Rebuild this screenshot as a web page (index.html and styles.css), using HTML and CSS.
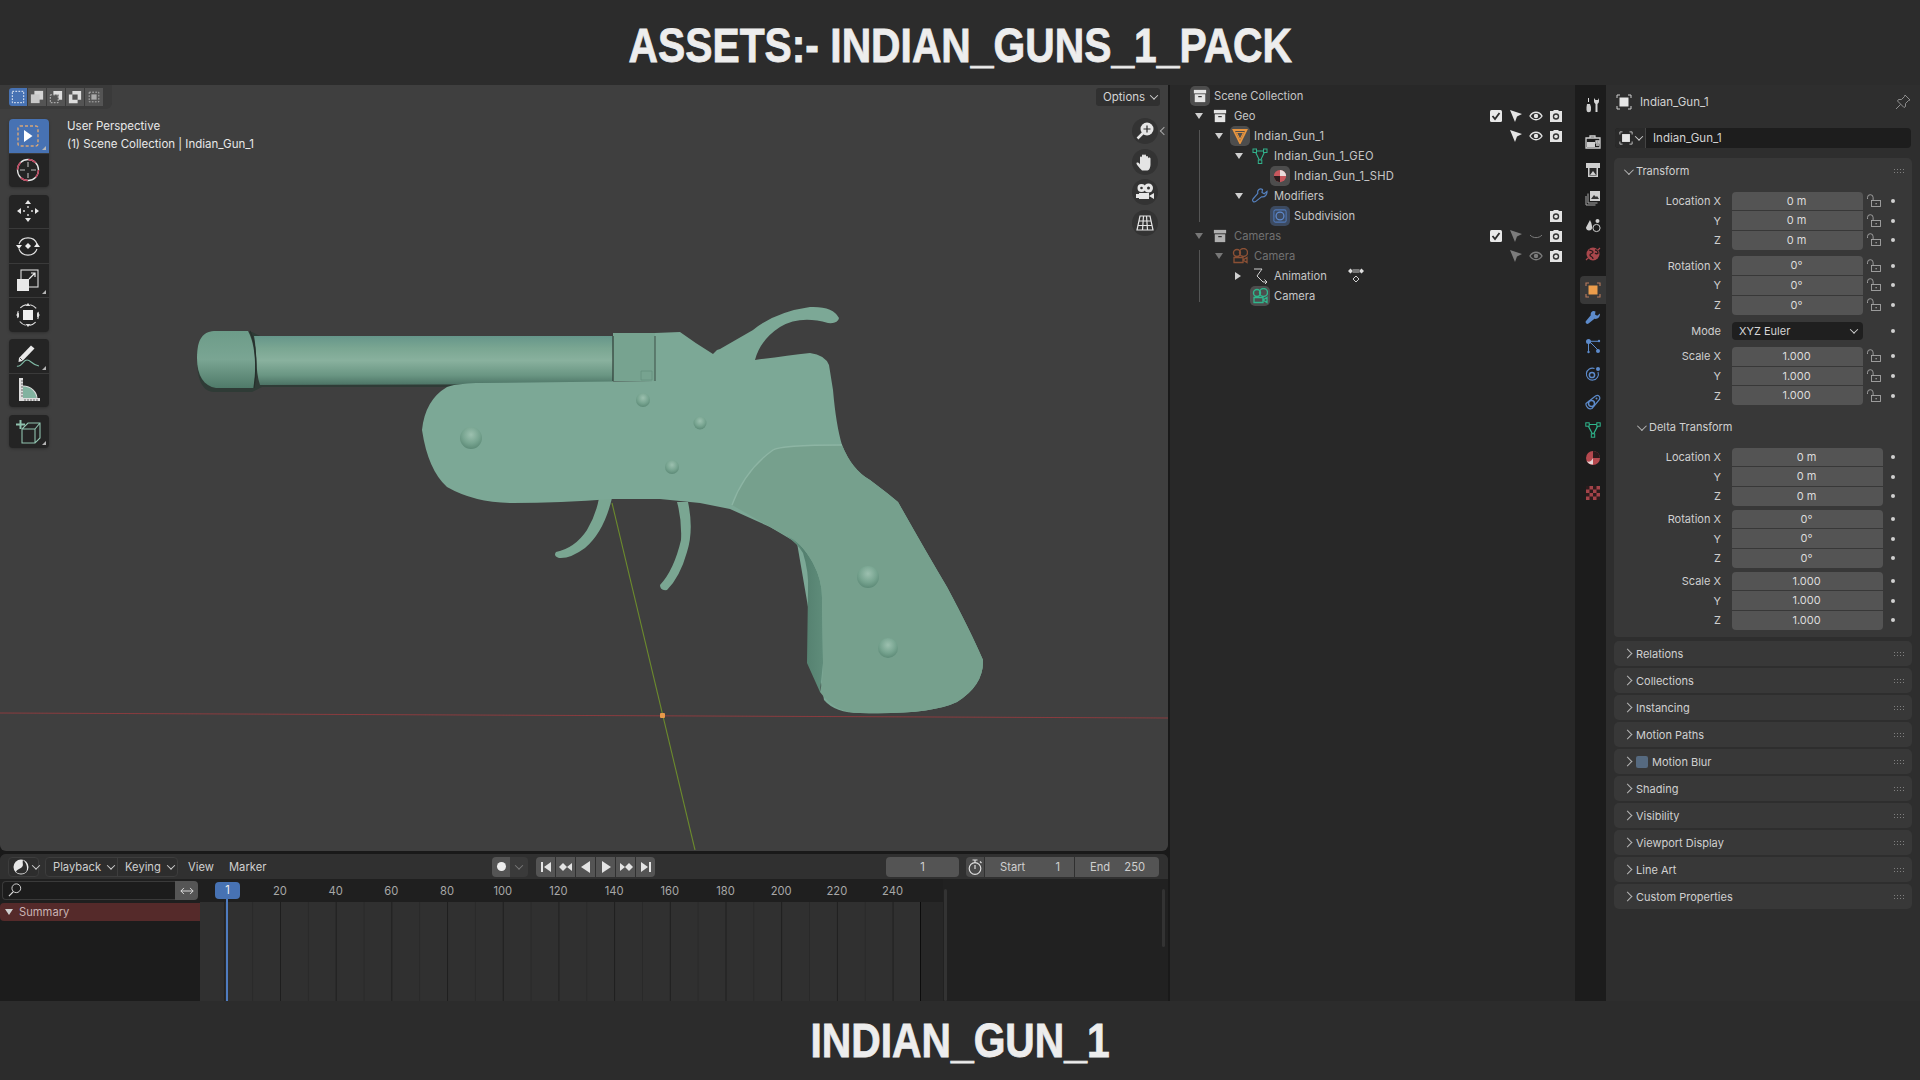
FILE: index.html
```html
<!DOCTYPE html>
<html lang="en">
<head>
<meta charset="utf-8">
<title>Indian Gun 1</title>
<link rel="stylesheet" href="styles.css">
</head>
<body>
<svg class="sprite" width="0" height="0" aria-hidden="true">
  <defs>
    <linearGradient id="barrelGrad" x1="0" y1="0" x2="0" y2="1">
      <stop offset="0" stop-color="#66968a"/><stop offset=".25" stop-color="#7aa692"/><stop offset=".5" stop-color="#89b19e"/><stop offset=".8" stop-color="#6a9683"/><stop offset="1" stop-color="#4c7365"/>
    </linearGradient>
    <linearGradient id="muzzleGrad" x1="0" y1="0" x2="0" y2="1">
      <stop offset="0" stop-color="#6d9c89"/><stop offset=".5" stop-color="#7aa593"/><stop offset="1" stop-color="#4f7a69"/>
    </linearGradient>
    <linearGradient id="stripGrad" x1="0" y1="0" x2="1" y2="0">
      <stop offset="0" stop-color="#6f9d8a"/><stop offset=".5" stop-color="#54806f"/><stop offset="1" stop-color="#5f8c7a"/>
    </linearGradient>
    <radialGradient id="rivetGrad" cx=".5" cy=".35" r=".65">
      <stop offset="0" stop-color="#9cc0af"/><stop offset=".6" stop-color="#77a490"/><stop offset="1" stop-color="#5d8a77"/>
    </radialGradient>
  </defs>
  <symbol id="i-select" viewBox="0 0 24 24"><rect x="2" y="2" width="20" height="20" rx="2" fill="none" stroke="#d8a679" stroke-width="1.4" stroke-dasharray="3 2"/><path d="M8 6l8.500 6L8 18z" fill="#fff"/></symbol>
  <symbol id="i-cursor" viewBox="0 0 24 24"><circle cx="12" cy="12" r="10.5" fill="none" stroke="#e4e4e4" stroke-width="1.3"/><circle cx="12" cy="12" r="10.5" fill="none" stroke="#c0425c" stroke-width="1.4" stroke-dasharray="8 8.5"/><path d="M12 4v5M12 15v5M4 12h5M15 12h5" stroke="#bbb" stroke-width="1.1"/></symbol>
  <symbol id="i-move" viewBox="0 0 24 24"><path d="M12 1l3 4H9zM12 23l-3-4h6zM1 12l4-3v6zM23 12l-4 3V9z" fill="#e8e8e8"/><path d="M12 7v2M12 15v2M7 12h2M15 12h2" stroke="#ddd" stroke-width="1.4"/></symbol>
  <symbol id="i-rotate" viewBox="0 0 24 24"><path d="M3 10a9.500 9 0 0 1 18 0M21 15a9.500 9 0 0 1-18 0" fill="none" stroke="#e4e4e4" stroke-width="1.1"/><path d="M12 9l3 3-3 3-3-3z" fill="#eee"/><path d="M0 11h6l-3 4zM24 13h-6l3-4z" fill="#eee"/></symbol>
  <symbol id="i-scale" viewBox="0 0 24 24"><rect x="5" y="2" width="17" height="17" fill="none" stroke="#ddd" stroke-width="1.1"/><rect x="1" y="11" width="12" height="12" fill="#e9e9e9"/><path d="M13 11l6-6M15 5h4v4" fill="none" stroke="#eee" stroke-width="1.2"/></symbol>
  <symbol id="i-transform" viewBox="0 0 24 24"><circle cx="12" cy="12" r="10.5" fill="none" stroke="#ddd" stroke-width="1.1" stroke-dasharray="7 3.9" stroke-dashoffset="3"/><rect x="7" y="7" width="10" height="10" fill="#eee"/><path d="M12 0l2.500 3h-5zM12 24l-2.500-3h5zM0 12l3-2.500v5zM24 12l-3 2.500v-5z" fill="#ddd"/></symbol>
  <symbol id="i-annotate" viewBox="0 0 24 24"><path d="M3 14L15 1.500l3.500 3L6.500 17 2.500 18z" fill="#eaeaea"/><path d="M4 14l2.500 2.500" stroke="#333" stroke-width=".8"/><path d="M1 22c4 2 6-6 10-6s5 5 12 6" fill="none" stroke="#7fb9a4" stroke-width="1.200"/></symbol>
  <symbol id="i-measure" viewBox="0 0 24 24"><path d="M7 21V8c8 0 14 6 14 13z" fill="#82b3a0"/><path d="M7 8c8 0 14 6 14 13" fill="none" stroke="#ddd" stroke-width="1.1"/><rect x="3" y="0" width="4" height="23" fill="#ddd"/><rect x="3" y="20" width="21" height="3" fill="#ddd"/><path d="M5 3h2M5 6h2M5 9h2M5 12h2M5 15h2M5 18h2M9 21v2M12 21v2M15 21v2M18 21v2M21 21v2" stroke="#333" stroke-width=".7"/></symbol>
  <symbol id="i-addcube" viewBox="0 0 26 26"><path d="M7 11l6-6h12v15l-5 5H7zM7 11h13v14M20 11l5-6" fill="none" stroke="#8fc2ae" stroke-width="1.100"/><path d="M1 6.500h9M5.500 2v9" stroke="#8fc2ae" stroke-width="2"/></symbol>
  <symbol id="i-m1" viewBox="0 0 16 16"><rect x="1.500" y="1.500" width="13" height="13" fill="none" stroke="#fff" stroke-dasharray="2 1.500"/></symbol>
  <symbol id="i-m2" viewBox="0 0 16 16"><rect x="5" y="1" width="10" height="10" fill="#d5d5d5"/><rect x="1" y="5" width="10" height="10" fill="#c8c8c8"/></symbol>
  <symbol id="i-m3" viewBox="0 0 16 16"><rect x="1.500" y="5.500" width="9" height="9" fill="none" stroke="#ccc" stroke-dasharray="2 1.500"/><path d="M5 1h10v10h-4V5H5z" fill="#ddd"/></symbol>
  <symbol id="i-m4" viewBox="0 0 16 16"><path d="M5 1h10v10h-4V5H5zM1 5h4v6h6v4H1z" fill="#ddd"/></symbol>
  <symbol id="i-m5" viewBox="0 0 16 16"><rect x="2.500" y="2.500" width="11" height="11" fill="none" stroke="#bbb" stroke-dasharray="2 1.500"/><rect x="5" y="5" width="6" height="6" fill="#aaa"/></symbol>
  <symbol id="i-zoomin" viewBox="0 0 18 18"><circle cx="11" cy="7" r="6.500" fill="#e6e6e6"/><path d="M1.500 16.500L7 11" stroke="#e6e6e6" stroke-width="2.500"/><path d="M11 3.500v7M7.500 7h7" stroke="#2a2a2a" stroke-width="1.200"/></symbol>
  <symbol id="i-hand" viewBox="0 0 18 18"><path d="M6 17.500C3 14.500 0 11 .5 10s2.500-.5 3.500 1.500V4.500c0-1.500 2-1.500 2 0V8V2.500c0-1.500 2-1.500 2 0V8V2.500c0-1.500 2-1.500 2 0V8V4c0-1.500 2-1.500 2 0v3.500-2c0-1.500 2.500-1.500 2.500 0v6c0 3-1.500 6-3 6z" fill="#e4e4e4"/></symbol>
  <symbol id="i-camgiz" viewBox="0 0 18 18"><circle cx="5.500" cy="5" r="4" fill="#e6e6e6"/><circle cx="12.500" cy="5" r="4.500" fill="#e6e6e6"/><circle cx="5.500" cy="5" r="1.300" fill="#333"/><circle cx="12.500" cy="5" r="1.500" fill="#333"/><rect x="3" y="10" width="10" height="6" fill="#e6e6e6"/><path d="M13 13l5-3v6zM0 11h3v4H0z" fill="#e6e6e6"/></symbol>
  <symbol id="i-persp" viewBox="0 0 18 18"><path d="M4 2h10l3 14H1zM2.700 7h12.600M2 11.500h14M7.500 2L6.500 16M10.500 2l1 14" fill="none" stroke="#e4e4e4" stroke-width="1.200"/></symbol>
  <symbol id="i-coll" viewBox="0 0 16 16"><path d="M1 1h14v4H1z" fill="currentColor"/><path d="M2 6h12v9H2z" fill="currentColor"/><rect x="6" y="8" width="4" height="1.400" fill="#333"/></symbol>
  <symbol id="i-objmesh" viewBox="0 0 16 16"><path d="M1.500 2h13L8 15z" fill="none" stroke="#e8953f" stroke-width="1.800"/><path d="M4.500 4.500h7L8 11.500z" fill="none" stroke="#e8953f" stroke-width="1.100"/></symbol>
  <symbol id="i-mesh" viewBox="0 0 16 16"><path d="M3 3h10L8 13.500z" fill="none" stroke="#31b08a" stroke-width="1.100"/><rect x="1" y="1" width="3.500" height="3.500" fill="#282828" stroke="#31b08a"/><rect x="11.500" y="1" width="3.500" height="3.500" fill="#282828" stroke="#31b08a"/><rect x="6.300" y="12" width="3.500" height="3.500" fill="#282828" stroke="#31b08a"/></symbol>
  <symbol id="i-mat" viewBox="0 0 16 16"><circle cx="8" cy="8" r="7" fill="#c9575d"/><path d="M8 1a7 7 0 0 1 7 7H8z" fill="#e9dcdc"/><path d="M8 8v7a7 7 0 0 1-7-7z" fill="#2e1d1e"/></symbol>
  <symbol id="i-wrench" viewBox="0 0 16 16"><path d="M15 3.500l-2.800 2.300L10 4.500l.5-3C8-.2 5 1.800 5.800 5.300L1 11c-1.200 1.500.6 3.800 2.500 2.600l6-4.800c3.500.6 5.800-2.300 5.500-5.300z" fill="none" stroke="#5580bd" stroke-width="1.200"/></symbol>
  <symbol id="i-wrenchfill" viewBox="0 0 16 16"><path d="M15 3.500l-2.800 2.300L10 4.500l.5-3C8-.2 5 1.800 5.800 5.300L1 11c-1.200 1.500.6 3.800 2.500 2.600l6-4.800c3.500.6 5.800-2.300 5.500-5.300z" fill="#5d8bcb"/></symbol>
  <symbol id="i-subd" viewBox="0 0 16 16"><rect x="1" y="1" width="14" height="14" rx="2" fill="none" stroke="#4f78b8" stroke-width="1.200"/><circle cx="8" cy="8" r="4.500" fill="none" stroke="#5f8bcf" stroke-width="1.400"/></symbol>
  <symbol id="i-check" viewBox="0 0 12 12"><rect width="12" height="12" rx="1.500" fill="#e8e8e8"/><path d="M2.500 6l2.500 3 4.500-6" fill="none" stroke="#2a2a2a" stroke-width="1.800"/></symbol>
  <symbol id="i-arrow" viewBox="0 0 14 14"><path d="M1 1l12 4-5 2.500L6 13z" fill="currentColor"/></symbol>
  <symbol id="i-eye" viewBox="0 0 14 14"><path d="M1 7c3-5 9-5 12 0-3 5-9 5-12 0z" fill="none" stroke="currentColor" stroke-width="1.400"/><circle cx="7" cy="7" r="2.200" fill="currentColor"/></symbol>
  <symbol id="i-eyeoff" viewBox="0 0 14 14"><path d="M1 6c3 3.500 9 3.500 12 0" fill="none" stroke="currentColor"/></symbol>
  <symbol id="i-render" viewBox="0 0 14 14"><path d="M1 2h3l1-1h4l1 1h3v11H1z" fill="currentColor"/><circle cx="7" cy="7.500" r="3.200" fill="#333"/><circle cx="7" cy="7.500" r="1.800" fill="currentColor"/></symbol>
  <symbol id="i-camobj" viewBox="0 0 16 16"><circle cx="5" cy="5" r="3.500" fill="none" stroke="currentColor" stroke-width="1.400"/><circle cx="11.500" cy="4.500" r="4" fill="none" stroke="currentColor" stroke-width="1.400"/><path d="M2 9.500h9v5H2zM11 12l4-2.500v5z" fill="none" stroke="currentColor" stroke-width="1.300"/></symbol>
  <symbol id="i-anim" viewBox="0 0 16 16"><path d="M2 1h8L5 8l6 6h4M12.500 11.500L15 14l-2.500 2.500" fill="none" stroke="#d0d0d0" stroke-width="1"/></symbol>
  <symbol id="i-keys" viewBox="0 0 18 18"><path d="M1 4l2.500-2.500L6 4 3.500 6.500zM12 4l2.500-2.500L17 4l-2.500 2.500z" fill="#ddd"/><rect x="5.500" y="2" width="7" height="4" fill="#777"/><path d="M9 9l3 3-3 3-3-3z" fill="none" stroke="#d0d0d0"/></symbol>
  <symbol id="i-objbox" viewBox="0 0 16 16"><path d="M1 4V1h3M12 1h3v3M15 12v3h-3M4 15H1v-3" fill="none" stroke="#cfcfcf"/><rect x="3.500" y="3.500" width="9" height="9" fill="#e6e6e6"/></symbol>
  <symbol id="i-objorange" viewBox="0 0 16 16"><path d="M1 4V1h3M12 1h3v3M15 12v3h-3M4 15H1v-3" fill="none" stroke="#b87a5c" stroke-width="1.100"/><rect x="3.500" y="3.500" width="9" height="9" fill="#eb9c4b"/></symbol>
  <symbol id="i-pin" viewBox="0 0 16 16"><path d="M10 1l5 5-1.500.5-3 3 0 3L9 13.500 2.500 7 3.500 5.500h3l3-3zM5.500 10.500L1 15" fill="none" stroke="#999" stroke-width=".9"/></symbol>
  <symbol id="i-lock" viewBox="0 0 16 16"><path d="M1.500 6V4.500a2.800 2.800 0 0 1 5.600 0V7.500" fill="none" stroke="#a6a6a6" stroke-width=".9"/><rect x="5.500" y="7.500" width="9" height="6" fill="none" stroke="#a6a6a6" stroke-width=".9"/><rect x="9.500" y="10" width="1.300" height="1.300" fill="#a6a6a6"/></symbol>
  <symbol id="i-grip" viewBox="0 0 12 6"><path d="M0 1.500h1M3 1.500h1M6 1.500h1M9 1.500h1M0 4.500h1M3 4.500h1M6 4.500h1M9 4.500h1" stroke="#808080" stroke-width="1"/></symbol>
  <symbol id="i-tool" viewBox="0 0 16 16"><path d="M3.500 1v4" stroke="#ddd" stroke-width="1"/><path d="M2 7h3l1 3v3a2 2 0 0 1-4.500 0v-3z" fill="#ccc"/><path d="M9 1v3c0 2 1 2.500 1.500 3v8h2V7c.5-.5 1.500-1 1.500-3V1l-1 2h-2.500z" fill="#d6d6d6"/></symbol>
  <symbol id="i-tabrender" viewBox="0 0 16 16"><path d="M1 4h14v10H1z" fill="none" stroke="#cfcfcf" stroke-width="1.300"/><path d="M5 4V2h5v2M11 7h3v2h-3zM11 11h3" stroke="#cfcfcf" stroke-width="1.300" fill="none"/><path d="M2 8h8v5H2z" fill="#cfcfcf"/></symbol>
  <symbol id="i-taboutput" viewBox="0 0 16 16"><path d="M1 1h14v5h-2v9H3V6H1z" fill="#cfcfcf"/><rect x="4.500" y="6" width="7" height="7.500" fill="#2a2a2a"/><path d="M5 13l3-4 3 4z" fill="#cfcfcf"/></symbol>
  <symbol id="i-tablayer" viewBox="0 0 16 16"><rect x="5" y="1" width="10" height="10" fill="#cfcfcf"/><path d="M6 9l3-4 2 2 1-1 2 3z" fill="#333"/><path d="M3 3.500V13h9.500M1 6v9h9.500" fill="none" stroke="#a8a8a8"/></symbol>
  <symbol id="i-tabscene" viewBox="0 0 16 16"><path d="M5 2L1 9.500C1 13 5 13 6.500 11.500 8.500 9 5 2 5 2z" fill="#cfcfcf"/><circle cx="11.500" cy="10" r="3.600" fill="none" stroke="#cfcfcf"/><circle cx="12.500" cy="3" r="2" fill="#cfcfcf"/></symbol>
  <symbol id="i-tabworld" viewBox="0 0 16 16"><circle cx="8" cy="8" r="6.500" fill="#a9474c"/><path d="M4 4c2 1 4 0 4 2s-3 1-3 3 3 1 3 4M10 4c2 0 3 2 3 3s-2 1-3 0" fill="none" stroke="#2c1b1c" stroke-width="1.300"/><path d="M1 14l2-2M15 2l-2 2" stroke="#a9474c" stroke-width="1.200"/></symbol>
  <symbol id="i-tabpart" viewBox="0 0 16 16"><circle cx="3.500" cy="3.500" r="2.500" fill="#5d8bcb"/><circle cx="13" cy="13" r="2" fill="#5d8bcb"/><circle cx="3.500" cy="14" r="1.200" fill="#5d8bcb"/><circle cx="14" cy="3" r="1.200" fill="#5d8bcb"/><path d="M5 4l8 8M3.500 5v8M5.500 3.300H13" stroke="#5d8bcb"/></symbol>
  <symbol id="i-tabphys" viewBox="0 0 16 16"><path d="M13 6a6 6 0 1 1-3.500-3.500" fill="none" stroke="#5d8bcb" stroke-width="1.100"/><circle cx="7" cy="9" r="2.600" fill="none" stroke="#5d8bcb" stroke-width="1.500"/><circle cx="13" cy="3" r="2" fill="#5d8bcb"/></symbol>
  <symbol id="i-tabcons" viewBox="0 0 16 16"><path d="M1 9.500L10.500 2c3-1.700 5 1 4 3.500L7 14.500c-3 1.500-6.500-2-6-5z" fill="none" stroke="#5d8bcb" stroke-width="1.200"/><circle cx="6.500" cy="9.500" r="3" fill="none" stroke="#5d8bcb" stroke-width="1.500"/><circle cx="11.500" cy="4.500" r="1" fill="#5d8bcb"/></symbol>
  <symbol id="i-tabdata" viewBox="0 0 16 16"><path d="M2.500 2.500h11L8 13z" fill="none" stroke="#2fb78d" stroke-width="1.200"/><rect x=".8" y=".8" width="3.400" height="3.400" fill="#1c1c1c" stroke="#2fb78d"/><rect x="11.800" y=".8" width="3.400" height="3.400" fill="#1c1c1c" stroke="#2fb78d"/><rect x="6.300" y="11.800" width="3.400" height="3.400" fill="#1c1c1c" stroke="#2fb78d"/></symbol>
  <symbol id="i-tabmat" viewBox="0 0 16 16"><circle cx="8" cy="8" r="7" fill="#b5484e"/><path d="M8 1a7 7 0 0 1 7 7H8z" fill="#2c1b1c"/><path d="M8 8v6.500A7 7 0 0 1 1.700 11c2 1.500 5 .5 6.300-3z" fill="#e3d5d5"/></symbol>
  <symbol id="i-tabtex" viewBox="0 0 16 16"><rect x="1" y="1" width="14" height="14" fill="#a44349"/><path d="M1 1h3.500v3.500H1zM8 1h3.500v3.500H8zM4.500 4.500H8V8H4.500zM11.500 4.500H15V8h-3.500zM1 8h3.500v3.500H1zM8 8h3.500v3.500H8zM4.500 11.500H8V15H4.500zM11.500 11.500H15V15h-3.500z" fill="#2c1b1c"/></symbol>
  <symbol id="i-clock" viewBox="0 0 16 16"><circle cx="8" cy="8" r="7.500" fill="#e8e8e8"/><path d="M10 1c-1 3 1 5-1 7s-5 2-6 5c3 2 7 2 10 0 2-3 1-9-3-12z" fill="#2e2e2e"/></symbol>
  <symbol id="i-search" viewBox="0 0 16 16"><circle cx="9.500" cy="6" r="5" fill="none" stroke="#d8d8d8" stroke-width="1.100"/><path d="M6 10l-5 5" stroke="#d8d8d8" stroke-width="1.300"/></symbol>
  <symbol id="i-swap" viewBox="0 0 16 16"><path d="M1 8h14M4.500 4.500L1 8l3.500 3.500M11.500 4.500L15 8l-3.500 3.500" fill="none" stroke="#ddd" stroke-width="1.100"/></symbol>
  <symbol id="i-first" viewBox="0 0 12 12"><rect x="1" y="1" width="2" height="10" fill="#e4e4e4"/><path d="M11 1v10L4 6z" fill="#e4e4e4"/></symbol>
  <symbol id="i-prevkey" viewBox="0 0 14 12"><path d="M4 2l4 4-4 4-4-4z" fill="#e4e4e4"/><path d="M8 6l5-4v8z" fill="#e4e4e4"/></symbol>
  <symbol id="i-rev" viewBox="0 0 12 12"><path d="M10 0v12L1 6z" fill="#e4e4e4"/></symbol>
  <symbol id="i-play" viewBox="0 0 12 12"><path d="M2 0v12l9-6z" fill="#e4e4e4"/></symbol>
  <symbol id="i-nextkey" viewBox="0 0 14 12"><path d="M10 2l4 4-4 4-4-4z" fill="#e4e4e4"/><path d="M6 6L1 2v8z" fill="#e4e4e4"/></symbol>
  <symbol id="i-last" viewBox="0 0 12 12"><rect x="9" y="1" width="2" height="10" fill="#e4e4e4"/><path d="M1 1v10l7-5z" fill="#e4e4e4"/></symbol>
  <symbol id="i-watch" viewBox="0 0 16 16"><circle cx="8" cy="9.500" r="5.800" fill="none" stroke="#ddd" stroke-width="1.200"/><path d="M8 10V6M5.500 1h5M8 1v2.500M13 2.500l1.500 1.500" stroke="#ddd" stroke-width="1.200"/></symbol>
</svg>

<header class="banner banner-top"><h1 class="banner-text">ASSETS:- INDIAN_GUNS_1_PACK</h1></header>

<main class="workspace">
  <div class="left-col">
    <section class="viewport">
      <svg class="scene" viewBox="0 85 1168 765" aria-hidden="true">
        <path d="M0 713L1168 718" stroke="#8a3c3f" stroke-width="1" fill="none"/>
        <path d="M612 503L695 850" stroke="#6c8b2d" stroke-width="1.100" fill="none"/>
        <path d="M197 360C197 340 202 332 212 332H252L262 337H613V387H262L252 392H214C202 392 197 378 197 360z" fill="#2f3b36"/>
        <path d="M197 358C197 340 202 332 214 331L248 331C256 345 256 370 254 388H216C204 386 197 376 197 358z" fill="url(#muzzleGrad)"/>
        <path d="M254 336L613 336V384L260 385C255 370 257 350 254 336z" fill="url(#barrelGrad)"/>
        <path d="M250 331C257 345 257 370 254 388" stroke="#26302c" stroke-width="1.300" fill="none"/>
        <path d="M613 333H655V381H613z" fill="#77a390"/>
        <path d="M613 336V381" stroke="#2f3d37" stroke-width="1.200"/>
        <path d="M641 371h11v9h-11z" fill="none" stroke="#648f7d" stroke-width=".8"/>
        <path d="M599 498L612 498Q604 532 585 548Q570 559 559 558Q553 556 556 552Q575 548 587 530Q596 515 599 498z" fill="#7aa692"/>
        <path d="M677 502H688Q694 530 687 552Q680 577 667 590Q660 591 660 585Q674 570 681 540Q682 520 677 502z" fill="#7aa692"/>
        <path d="M447 387C455 384 470 383 480 383L655 381V333L680 332Q695 343 713 354L717 350L720 349L753 330Q775 312 810 307Q833 306 839 318Q838 324 828 323Q800 315 780 327Q760 340 755 360Q785 356 810 353Q825 355 829 365L833 390Q836 425 842 445Q852 470 870 480L887 493L898 502Q925 550 947 587Q970 630 983 660Q984 685 957 702Q930 715 860 713Q835 713 824 700L797 543L770 527L730 509L700 503L660 499H612Q560 503 513 503Q475 503 447 487Q428 470 422 430Q425 400 447 387z" fill="#7ca896"/>
        <path d="M785 535Q800 540 813 563Q822 580 822 597L823 663L820 692L807 663L808 590Q809 572 803 553Q797 543 785 535z" fill="url(#stripGrad)"/>
        <path d="M732 505Q745 470 773 450Q780 445 842 445Q852 470 870 480L887 493L898 502Q925 550 947 587Q970 630 983 660Q984 685 957 702Q930 715 860 713Q835 713 820 692Q823 680 823 663L822 597Q822 580 813 563Q800 540 785 535L770 527z" fill="#76a08d"/>
        <path d="M732 505Q745 470 773 450Q780 445 842 445" fill="none" stroke="#8db5a4" stroke-width="1.300"/>
        <path d="M655 381V336" stroke="#3c4f47" stroke-width="1"/>
        <circle cx="471" cy="438" r="11" fill="url(#rivetGrad)"/>
        <circle cx="643" cy="400" r="7" fill="url(#rivetGrad)"/>
        <circle cx="700" cy="423" r="6.500" fill="url(#rivetGrad)"/>
        <circle cx="672" cy="467" r="7" fill="url(#rivetGrad)"/>
        <circle cx="868" cy="577" r="11" fill="url(#rivetGrad)"/>
        <circle cx="888" cy="648" r="10" fill="url(#rivetGrad)"/>
        <rect x="660" y="713" width="5" height="5" rx="1" fill="#e8994a"/>
      </svg>

      <div class="modes">
        <span class="mode mode-on"><svg class="ic14"><use href="#i-m1"/></svg></span>
        <span class="mode"><svg class="ic14"><use href="#i-m2"/></svg></span>
        <span class="mode"><svg class="ic14"><use href="#i-m3"/></svg></span>
        <span class="mode"><svg class="ic14"><use href="#i-m4"/></svg></span>
        <span class="mode"><svg class="ic14"><use href="#i-m5"/></svg></span>
      </div>

      <div class="toolbar">
        <div class="toolgroup">
          <span class="tool tool-on corner"><svg class="ic24"><use href="#i-select"/></svg></span>
          <span class="tool"><svg class="ic24"><use href="#i-cursor"/></svg></span>
        </div>
        <div class="toolgroup">
          <span class="tool"><svg class="ic24"><use href="#i-move"/></svg></span>
          <span class="tool"><svg class="ic24"><use href="#i-rotate"/></svg></span>
          <span class="tool corner"><svg class="ic24"><use href="#i-scale"/></svg></span>
          <span class="tool"><svg class="ic24"><use href="#i-transform"/></svg></span>
        </div>
        <div class="toolgroup">
          <span class="tool corner"><svg class="ic24"><use href="#i-annotate"/></svg></span>
          <span class="tool"><svg class="ic24"><use href="#i-measure"/></svg></span>
        </div>
        <div class="toolgroup">
          <span class="tool corner"><svg class="ic26"><use href="#i-addcube"/></svg></span>
        </div>
      </div>

      <div class="vp-info">
        <div>User Perspective</div>
        <div>(1) Scene Collection | Indian_Gun_1</div>
      </div>

      <div class="options">Options<span class="chev"></span></div>
      <span class="sidearrow"></span>

      <div class="gizmos">
        <span class="gizmo"><svg class="ic18"><use href="#i-zoomin"/></svg></span>
        <span class="gizmo"><svg class="ic18"><use href="#i-hand"/></svg></span>
        <span class="gizmo"><svg class="ic18"><use href="#i-camgiz"/></svg></span>
        <span class="gizmo"><svg class="ic18"><use href="#i-persp"/></svg></span>
      </div>
    </section>

    <section class="timeline">
      <div class="tl-head">
        <span class="hbtn editor"><svg class="ic16"><use href="#i-clock"/></svg><span class="chev"></span></span>
        <div class="menugroup">
          <span class="menu menu-play">Playback<span class="chev"></span></span>
          <span class="menu menu-key">Keying<span class="chev"></span></span>
        </div>
        <span class="tl-view">View</span>
        <span class="tl-marker">Marker</span>
        <div class="rec">
          <span class="rec-a"><i class="recdot"></i></span>
          <span class="rec-b"><span class="chev chev-dim"></span></span>
        </div>
        <div class="transport">
          <span class="tbtn"><svg class="ic12"><use href="#i-first"/></svg></span>
          <span class="tbtn"><svg class="ic14w"><use href="#i-prevkey"/></svg></span>
          <span class="tbtn"><svg class="ic12"><use href="#i-rev"/></svg></span>
          <span class="tbtn"><svg class="ic12"><use href="#i-play"/></svg></span>
          <span class="tbtn"><svg class="ic14w"><use href="#i-nextkey"/></svg></span>
          <span class="tbtn"><svg class="ic12"><use href="#i-last"/></svg></span>
        </div>
        <span class="curframe">1</span>
        <div class="range">
          <span class="watch"><svg class="ic16"><use href="#i-watch"/></svg></span>
          <span class="rfield rf-start"><span>Start</span><span>1</span></span>
          <span class="rfield rf-end"><span>End</span><span>250</span></span>
        </div>
      </div>
      <div class="tl-body">
        <div class="channels">
          <div class="searchrow">
            <span class="searchbox"><svg class="ic14"><use href="#i-search"/></svg></span>
            <span class="swapbtn"><svg class="ic14"><use href="#i-swap"/></svg></span>
          </div>
          <div class="summary"><i class="tri-down"></i>Summary</div>
        </div>
        <div class="tl-mid">
          <div class="ruler">
            <span>20</span><span>40</span><span>60</span><span>80</span><span>100</span><span>120</span><span>140</span><span>160</span><span>180</span><span>200</span><span>220</span><span>240</span>
          </div>
          <div class="frames"><div class="frames-grid"></div><div class="frames-after"></div></div>
          <span class="playhead-line"></span>
          <span class="playhead">1</span>
        </div>
        <div class="tl-side"></div>
      </div>
    </section>
  </div>

  <section class="outliner">
    <div class="ol-row dm1"><span class="ol-tri"></span><span class="ol-ic boxed"><svg class="ic14"><use href="#i-coll"/></svg></span><span class="ol-name">Scene Collection</span></div>

    <div class="ol-row d0"><i class="tri-down"></i><span class="ol-ic"><svg class="ic14"><use href="#i-coll"/></svg></span><span class="ol-name">Geo</span>
      <span class="ol-flags"><svg class="ic12"><use href="#i-check"/></svg><svg class="ic14"><use href="#i-arrow"/></svg><svg class="ic14"><use href="#i-eye"/></svg><svg class="ic14"><use href="#i-render"/></svg></span></div>
    <div class="ol-branch">
      <div class="ol-row d1"><i class="tri-down"></i><span class="ol-ic boxed"><svg class="ic16"><use href="#i-objmesh"/></svg></span><span class="ol-name ol-long">Indian_Gun_1</span>
        <span class="ol-flags"><span></span><svg class="ic14"><use href="#i-arrow"/></svg><svg class="ic14"><use href="#i-eye"/></svg><svg class="ic14"><use href="#i-render"/></svg></span></div>
      <div class="ol-row d2"><i class="tri-down"></i><span class="ol-ic"><svg class="ic16"><use href="#i-mesh"/></svg></span><span class="ol-name ol-long">Indian_Gun_1_GEO</span></div>
      <div class="ol-row d3"><span class="ol-tri"></span><span class="ol-ic boxed"><svg class="ic14"><use href="#i-mat"/></svg></span><span class="ol-name ol-long">Indian_Gun_1_SHD</span></div>
      <div class="ol-row d2"><i class="tri-down"></i><span class="ol-ic"><svg class="ic16"><use href="#i-wrench"/></svg></span><span class="ol-name">Modifiers</span></div>
      <div class="ol-row d3"><span class="ol-tri"></span><span class="ol-ic boxed boxed-blue"><svg class="ic14"><use href="#i-subd"/></svg></span><span class="ol-name">Subdivision</span>
        <span class="ol-flags"><span></span><span></span><span></span><svg class="ic14"><use href="#i-render"/></svg></span></div>
    </div>

    <div class="ol-row d0 dim"><i class="tri-down"></i><span class="ol-ic"><svg class="ic14"><use href="#i-coll"/></svg></span><span class="ol-name">Cameras</span>
      <span class="ol-flags"><svg class="ic12"><use href="#i-check"/></svg><svg class="ic14"><use href="#i-arrow"/></svg><svg class="ic14"><use href="#i-eyeoff"/></svg><svg class="ic14 bright"><use href="#i-render"/></svg></span></div>
    <div class="ol-branch">
      <div class="ol-row d1 dim"><i class="tri-down"></i><span class="ol-ic cam-orange"><svg class="ic16"><use href="#i-camobj"/></svg></span><span class="ol-name">Camera</span>
        <span class="ol-flags"><span></span><svg class="ic14"><use href="#i-arrow"/></svg><svg class="ic14"><use href="#i-eye"/></svg><svg class="ic14 bright"><use href="#i-render"/></svg></span></div>
      <div class="ol-row d2"><i class="tri-right"></i><span class="ol-ic"><svg class="ic16"><use href="#i-anim"/></svg></span><span class="ol-name">Animation</span><svg class="ic18 keyicon"><use href="#i-keys"/></svg></div>
      <div class="ol-row d2"><span class="ol-tri"></span><span class="ol-ic boxed cam-green"><svg class="ic16"><use href="#i-camobj"/></svg></span><span class="ol-name">Camera</span></div>
    </div>
  </section>

  <section class="properties">
    <nav class="tabs">
      <div class="tabgroup"><span class="tab"><svg class="ic16"><use href="#i-tool"/></svg></span></div>
      <div class="tabgroup tg-render">
        <span class="tab"><svg class="ic16"><use href="#i-tabrender"/></svg></span>
        <span class="tab"><svg class="ic16"><use href="#i-taboutput"/></svg></span>
        <span class="tab"><svg class="ic16"><use href="#i-tablayer"/></svg></span>
        <span class="tab"><svg class="ic16"><use href="#i-tabscene"/></svg></span>
        <span class="tab"><svg class="ic16"><use href="#i-tabworld"/></svg></span>
      </div>
      <div class="tabgroup tg-object">
        <span class="tab tab-on"><svg class="ic16"><use href="#i-objorange"/></svg></span>
        <span class="tab"><svg class="ic16"><use href="#i-wrenchfill"/></svg></span>
        <span class="tab"><svg class="ic16"><use href="#i-tabpart"/></svg></span>
        <span class="tab"><svg class="ic16"><use href="#i-tabphys"/></svg></span>
        <span class="tab"><svg class="ic16"><use href="#i-tabcons"/></svg></span>
        <span class="tab"><svg class="ic16"><use href="#i-tabdata"/></svg></span>
        <span class="tab"><svg class="ic16"><use href="#i-tabmat"/></svg></span>
      </div>
      <div class="tabgroup tg-tex"><span class="tab"><svg class="ic16"><use href="#i-tabtex"/></svg></span></div>
    </nav>

    <div class="prop-main">
      <div class="prop-head"><svg class="ic16"><use href="#i-objbox"/></svg><span class="prop-title">Indian_Gun_1</span><svg class="ic16 pin"><use href="#i-pin"/></svg></div>
      <div class="namefield"><span class="name-ic"><svg class="ic14"><use href="#i-objbox"/></svg><span class="chev"></span></span><span class="name-val">Indian_Gun_1</span></div>

      <div class="panel">
        <div class="panel-head"><i class="chev-big down"></i><span>Transform</span><svg class="grip"><use href="#i-grip"/></svg></div>
        <div class="rowgroups">
          <div class="rows">
            <div class="row"><span class="lbl">Location X</span><span class="fld">0 m</span><svg class="ic16 lock"><use href="#i-lock"/></svg><i class="dot"></i></div>
            <div class="row"><span class="lbl">Y</span><span class="fld">0 m</span><svg class="ic16 lock"><use href="#i-lock"/></svg><i class="dot"></i></div>
            <div class="row"><span class="lbl">Z</span><span class="fld">0 m</span><svg class="ic16 lock"><use href="#i-lock"/></svg><i class="dot"></i></div>
          </div>
          <div class="rows">
            <div class="row"><span class="lbl">Rotation X</span><span class="fld">0°</span><svg class="ic16 lock"><use href="#i-lock"/></svg><i class="dot"></i></div>
            <div class="row"><span class="lbl">Y</span><span class="fld">0°</span><svg class="ic16 lock"><use href="#i-lock"/></svg><i class="dot"></i></div>
            <div class="row"><span class="lbl">Z</span><span class="fld">0°</span><svg class="ic16 lock"><use href="#i-lock"/></svg><i class="dot"></i></div>
          </div>
          <div class="rows">
            <div class="row"><span class="lbl">Mode</span><span class="select">XYZ Euler<span class="chev"></span></span><span></span><i class="dot"></i></div>
          </div>
          <div class="rows">
            <div class="row"><span class="lbl">Scale X</span><span class="fld">1.000</span><svg class="ic16 lock"><use href="#i-lock"/></svg><i class="dot"></i></div>
            <div class="row"><span class="lbl">Y</span><span class="fld">1.000</span><svg class="ic16 lock"><use href="#i-lock"/></svg><i class="dot"></i></div>
            <div class="row"><span class="lbl">Z</span><span class="fld">1.000</span><svg class="ic16 lock"><use href="#i-lock"/></svg><i class="dot"></i></div>
          </div>
        </div>

        <div class="sub-head"><i class="chev-big down"></i><span>Delta Transform</span></div>
        <div class="rowgroups tight">
          <div class="rows">
            <div class="row"><span class="lbl">Location X</span><span class="fld wide">0 m</span><i class="dot"></i></div>
            <div class="row"><span class="lbl">Y</span><span class="fld wide">0 m</span><i class="dot"></i></div>
            <div class="row"><span class="lbl">Z</span><span class="fld wide">0 m</span><i class="dot"></i></div>
          </div>
          <div class="rows">
            <div class="row"><span class="lbl">Rotation X</span><span class="fld wide">0°</span><i class="dot"></i></div>
            <div class="row"><span class="lbl">Y</span><span class="fld wide">0°</span><i class="dot"></i></div>
            <div class="row"><span class="lbl">Z</span><span class="fld wide">0°</span><i class="dot"></i></div>
          </div>
          <div class="rows">
            <div class="row"><span class="lbl">Scale X</span><span class="fld wide">1.000</span><i class="dot"></i></div>
            <div class="row"><span class="lbl">Y</span><span class="fld wide">1.000</span><i class="dot"></i></div>
            <div class="row"><span class="lbl">Z</span><span class="fld wide">1.000</span><i class="dot"></i></div>
          </div>
        </div>
      </div>

      <div class="collapsed">
        <div class="cpanel"><i class="chev-big right"></i><span>Relations</span><svg class="grip"><use href="#i-grip"/></svg></div>
        <div class="cpanel"><i class="chev-big right"></i><span>Collections</span><svg class="grip"><use href="#i-grip"/></svg></div>
        <div class="cpanel"><i class="chev-big right"></i><span>Instancing</span><svg class="grip"><use href="#i-grip"/></svg></div>
        <div class="cpanel"><i class="chev-big right"></i><span>Motion Paths</span><svg class="grip"><use href="#i-grip"/></svg></div>
        <div class="cpanel"><i class="chev-big right"></i><i class="blurbox"></i><span>Motion Blur</span><svg class="grip"><use href="#i-grip"/></svg></div>
        <div class="cpanel"><i class="chev-big right"></i><span>Shading</span><svg class="grip"><use href="#i-grip"/></svg></div>
        <div class="cpanel"><i class="chev-big right"></i><span>Visibility</span><svg class="grip"><use href="#i-grip"/></svg></div>
        <div class="cpanel"><i class="chev-big right"></i><span>Viewport Display</span><svg class="grip"><use href="#i-grip"/></svg></div>
        <div class="cpanel"><i class="chev-big right"></i><span>Line Art</span><svg class="grip"><use href="#i-grip"/></svg></div>
        <div class="cpanel"><i class="chev-big right"></i><span>Custom Properties</span><svg class="grip"><use href="#i-grip"/></svg></div>
      </div>
    </div>
  </section>
</main>

<footer class="banner banner-bottom"><div class="banner-text">INDIAN_GUN_1</div></footer>
</body>
</html>
```
FILE: styles.css
```css
* { box-sizing: border-box; }
html, body { margin: 0; padding: 0; }
body {
  width: 1920px;
  height: 1080px;
  overflow: hidden;
  background: #2c2c2c;
  font-family: "Inter", "Liberation Sans", sans-serif;
  font-size: 11.2px;
  color: #c6c6c6;
}
i { display: block; }
svg { display: block; flex: none; }
.sprite { position: absolute; }
.ic12 { width: 12px; height: 12px; }
.ic14 { width: 14px; height: 14px; }
.ic14w { width: 14px; height: 12px; }
.ic16 { width: 16px; height: 16px; }
.ic18 { width: 18px; height: 18px; }
.ic24 { width: 24px; height: 24px; }
.ic26 { width: 26px; height: 26px; }

.banner { display: flex; align-items: center; justify-content: center; background: #2c2c2c; }
.banner-top { height: 85px; padding-top: 6px; }
.banner-bottom { height: 79px; }
.banner-text {
  margin: 0;
  font-family: "Liberation Sans", sans-serif;
  font-weight: 700;
  font-size: 48px;
  line-height: 1;
  color: #ededed;
  white-space: nowrap;
  transform: scaleX(0.85);
  -webkit-text-stroke: 0.8px #ededed;
}

.workspace { display: flex; height: 916px; background: #191919; gap: 2px; }
.left-col { width: 1168px; display: flex; flex-direction: column; gap: 3px; }

/* viewport */
.viewport { position: relative; height: 766px; background: #3f3f3f; border-radius: 0 0 6px 6px; overflow: hidden; }
.scene { position: absolute; left: 0; top: 0; width: 1168px; height: 765px; }
.modes { position: absolute; left: 0; top: 0; display: flex; padding: 3px 8px 3px 9px; background: #3a3a3a; border-radius: 0 0 6px 0; }
.mode { width: 19px; height: 18px; background: #545454; display: flex; align-items: center; justify-content: center; border-right: 1px solid #3a3a3a; }
.mode-on { background: #4772b3; border-radius: 3px 0 0 3px; }
.toolbar { position: absolute; left: 9px; top: 34px; display: flex; flex-direction: column; gap: 7.5px; }
.toolgroup { display: flex; flex-direction: column; width: 40px; border-radius: 4px; overflow: hidden; gap: 1px; background: #3a3a3a; box-shadow: 0 1px 3px rgba(0,0,0,.25); }
.tool { position: relative; height: 33.5px; background: #242424; display: flex; align-items: center; justify-content: center; padding-right: 2px; }
.tool-on { background: #4772b3; }
.corner::after { content: ""; position: absolute; right: 3px; bottom: 3px; border: 2px solid transparent; border-right-color: #b5b5b5; border-bottom-color: #b5b5b5; }
.vp-info { position: absolute; left: 67px; top: 32px; font-size: 11.5px; line-height: 18px; color: #e8e8e8; }
.options { position: absolute; left: 1096px; top: 3px; width: 64px; height: 18px; background: #303030; border-radius: 3px; display: flex; align-items: center; padding-left: 7px; gap: 6px; font-size: 11.5px; color: #d4d4d4; }
.sidearrow { position: absolute; left: 1161px; top: 43px; width: 6px; height: 6px; border-left: 1px solid #aaa; border-bottom: 1px solid #aaa; transform: rotate(45deg); }
.gizmos { position: absolute; left: 1132px; top: 33px; display: flex; flex-direction: column; gap: 4.7px; }
.gizmo { width: 26px; height: 26px; border-radius: 50%; background: #333; display: flex; align-items: center; justify-content: center; }
.chev { display: inline-block; width: 6px; height: 6px; border-right: 1.2px solid #d0d0d0; border-bottom: 1.2px solid #d0d0d0; transform: rotate(45deg) translate(-1px,-1px); flex: none; }
.chev-dim { border-color: #777; }

/* timeline */
.timeline { flex: 1; display: flex; flex-direction: column; background: #2f2f2f; border-radius: 6px 6px 0 0; overflow: hidden; }
.tl-head { height: 25px; display: flex; align-items: center; padding-left: 8px; background: #303030; color: #cfcfcf; }
.hbtn { display: flex; align-items: center; }
.editor { width: 31px; height: 20px; padding-left: 4px; gap: 4px; border: 1px solid #3d3d3d; border-radius: 4px; background: #2d2d2d; }
.menugroup { margin-left: 6px; width: 133px; height: 20px; display: flex; border: 1px solid #3d3d3d; border-radius: 4px; background: #2d2d2d; }
.menu { display: flex; align-items: center; justify-content: space-between; padding: 0 3px 0 7px; }
.menu-play { width: 72px; border-right: 1px solid #3d3d3d; }
.menu-key { flex: 1; padding-left: 7px; }
.tl-view { margin-left: 10px; width: 41px; }
.tl-marker { width: 263px; }
.rec { width: 36px; height: 20px; display: flex; border-radius: 4px; overflow: hidden; }
.rec-a { width: 18px; background: #545454; display: flex; align-items: center; justify-content: center; }
.rec-b { flex: 1; background: #3a3a3a; display: flex; align-items: center; justify-content: center; }
.recdot { width: 9px; height: 9px; border-radius: 50%; background: #eee; }
.transport { margin-left: 8px; width: 119px; height: 20px; display: flex; gap: 1px; border-radius: 4px; overflow: hidden; }
.tbtn { flex: 1; background: #545454; display: flex; align-items: center; justify-content: center; }
.curframe { margin-left: 231px; width: 73px; height: 20px; background: #545454; border-radius: 4px; text-align: center; line-height: 20px; }
.range { margin-left: 7px; width: 193px; height: 20px; display: flex; gap: 1px; border-radius: 4px; overflow: hidden; }
.watch { width: 18px; background: #4a4a4a; display: flex; align-items: center; justify-content: center; }
.rfield { background: #545454; display: flex; align-items: center; justify-content: space-between; }
.rf-start { width: 89px; padding: 0 14px 0 15px; }
.rf-end { flex: 1; padding: 0 14px 0 15px; }
.tl-body { flex: 1; display: grid; grid-template-columns: 200px 743px 225px; }
.channels { background: #1c1c1c; }
.searchrow { height: 25px; padding: 2px 2px 4px 2px; display: flex; background: #1f1f1f; }
.searchbox { flex: 1; background: #1c1c1c; border: 1px solid #3a3a3a; border-right: 0; border-radius: 4px 0 0 4px; padding: 1px 0 0 5px; }
.swapbtn { width: 23px; background: #555; border-radius: 0 4px 4px 0; display: flex; align-items: center; justify-content: center; }
.summary { height: 18px; background: #552a2a; border-radius: 4px 0 0 4px; display: flex; align-items: center; gap: 6px; padding-left: 5px; margin-top: -1px; color: #c9b4b4; }
.tl-mid { position: relative; display: flex; flex-direction: column; }
.ruler { height: 23px; background: #1f1f1f; display: flex; align-items: center; padding-left: 52.15px; color: #a8a8a8; }
.ruler span { width: 55.7px; flex: none; text-align: center; }
.frames { flex: 1; display: flex; }
.frames-grid {
  width: 720px;
  background-color: #303030;
  background-image: linear-gradient(to right, #1e1e1e 1px, transparent 1px), linear-gradient(to right, #292929 1px, transparent 1px);
  background-size: 55.7px 100%, 55.7px 100%;
  background-position: 24.3px 0, -3.55px 0;
}
.frames-after { flex: 1; background: #272727; border-left: 1px solid #0c0c0c; }
.playhead { position: absolute; left: 15px; top: 3px; width: 25px; height: 17px; background: #4772b3; border-radius: 4px; text-align: center; line-height: 17px; color: #eee; }
.playhead-line { position: absolute; left: 26px; top: 20px; bottom: 0; width: 2px; background: #4f7cc0; }
.tl-side { background: #212121; position: relative; }
.tl-side::before { content: ""; position: absolute; left: 1px; top: 10px; bottom: 0; width: 3px; background: #333; border-radius: 2px; }
.tl-side::after { content: ""; position: absolute; right: 3px; top: 10px; height: 58px; width: 3px; background: #333; border-radius: 2px; }

/* outliner */
.outliner { width: 405px; margin-right: -2px; background: #282828; padding-top: 1px; }
.ol-branch { position: relative; }
.ol-branch::before { content: ""; position: absolute; left: 29px; top: 4px; bottom: 4px; width: 1px; background: #555; }
.ol-row { height: 20px; display: flex; align-items: center; padding-right: 9px; color: #c6c6c6; }
.dm1 { padding-left: 4px; }
.d0 { padding-left: 24px; }
.d1 { padding-left: 44px; }
.d2 { padding-left: 64px; }
.d3 { padding-left: 84px; }
.ol-tri { width: 10px; flex: none; }
.tri-down { width: 0; height: 0; border-left: 4px solid transparent; border-right: 4px solid transparent; border-top: 6px solid #d0d0d0; }
.ol-row .tri-down { margin-left: 1px; margin-right: 1px; flex: none; }
.tri-right { width: 0; height: 0; border-top: 4px solid transparent; border-bottom: 4px solid transparent; border-left: 6px solid #d0d0d0; }
.ol-row .tri-right { margin-left: 1px; margin-right: 3px; flex: none; }
.ol-ic { width: 20px; height: 20px; margin-left: 6px; margin-right: 4px; display: flex; align-items: center; justify-content: center; flex: none; color: #e4e4e4; }
.boxed { background: #4d4d4d; border-radius: 5px; }
.boxed-blue { background: #3c4a60; }
.cam-orange { color: #b2603a; }
.cam-green { color: #2fb78d; }
.ol-name { white-space: nowrap; }
.ol-long { letter-spacing: .3px; }
.ol-flags { margin-left: auto; display: grid; grid-template-columns: repeat(4, 20px); justify-items: center; align-items: center; color: #e4e4e4; }
.dim .ol-name { color: #717171; }
.dim .ol-ic { opacity: .72; }
.dim .tri-down { border-top-color: #777; }
.dim .ol-flags { color: #7c7c7c; }
.dim .ol-flags .bright { color: #e4e4e4; }
.keyicon { margin-left: 20px; }

/* properties */
.properties { width: 345px; display: flex; background: #2e2e2e; }
.tabs { width: 31px; background: #1c1c1c; padding-top: 6px; }
.tabgroup { display: flex; flex-direction: column; }
.tg-render { margin-top: 9px; }
.tg-object { margin-top: 8px; }
.tg-tex { margin-top: 7px; }
.tab { height: 28px; padding-left: 5px; display: flex; align-items: center; justify-content: center; }
.tab-on { background: #383838; margin-left: 5px; padding-left: 0; border-radius: 4px 0 0 4px; }
.prop-main { flex: 1; padding: 0 8px; font-size: 11px; }
.prop-head { height: 34px; display: flex; align-items: center; padding-left: 2px; gap: 8px; color: #d2d2d2; font-size: 11.5px; }
.prop-title { flex: 1; }
.pin { margin-right: 1px; }
.namefield { margin: 9px 1px 0; height: 20px; display: flex; border-radius: 4px; background: #1d1d1d; overflow: hidden; font-size: 11.5px; }
.name-ic { width: 31px; display: flex; align-items: center; padding-left: 4px; gap: 3px; background: #2a2a2a; border-right: 1px solid #444; flex: none; }
.name-val { padding-left: 7px; line-height: 20px; color: #d4d4d4; }
.panel { margin-top: 10px; background: #383838; border-radius: 5px 5px 4px 4px; padding-bottom: 7px; width: 298px; }
.panel-head, .cpanel { position: relative; display: flex; align-items: center; height: 26px; padding-left: 10px; gap: 5px; color: #d0d0d0; }
.grip { position: absolute; right: 6px; top: 50%; margin-top: -3px; width: 12px; height: 6px; }
.chev-big { width: 7px; height: 7px; border-right: 1px solid #b5b5b5; border-bottom: 1px solid #b5b5b5; flex: none; }
.chev-big.down { transform: rotate(45deg) translateY(-2px); }
.chev-big.right { transform: rotate(-45deg); }
.rowgroups { margin-top: 7px; display: flex; flex-direction: column; gap: 5.9px; }
.rowgroups.tight { margin-top: 8px; gap: 2.9px; }
.rows { display: flex; flex-direction: column; }
.row { height: 19.7px; display: grid; grid-template-columns: 118px 131px 20px 20px; align-items: center; justify-items: center; }
.lbl { justify-self: stretch; text-align: right; padding-right: 11px; color: #cfcfcf; }
.fld { justify-self: stretch; height: 18.7px; background: #545454; text-align: center; line-height: 18.7px; color: #dcdcdc; padding-right: 2px; }
.fld.wide { grid-column: span 2; }
.rows .row:first-child .fld { border-radius: 4px 4px 0 0; }
.rows .row:last-child .fld { border-radius: 0 0 4px 4px; }
.select { justify-self: stretch; height: 18px; background: #1f1f1f; border-radius: 4px; display: flex; align-items: center; justify-content: space-between; padding: 0 6px 0 7px; color: #d6d6d6; }
.lock { justify-self: start; margin-left: 3px; }
.dot { width: 4px; height: 4px; border-radius: 50%; background: #d0d0d0; }
.sub-head { height: 24px; margin-top: 9.6px; display: flex; align-items: center; padding-left: 23px; gap: 5px; color: #d0d0d0; }
.collapsed { margin-top: 4px; display: flex; flex-direction: column; gap: 2px; width: 298px; }
.cpanel { height: 25px; background: #383838; border-radius: 5px; }
.blurbox { width: 12px; height: 12px; border-radius: 2px; background: #566a80; margin-right: -1px; }
```
